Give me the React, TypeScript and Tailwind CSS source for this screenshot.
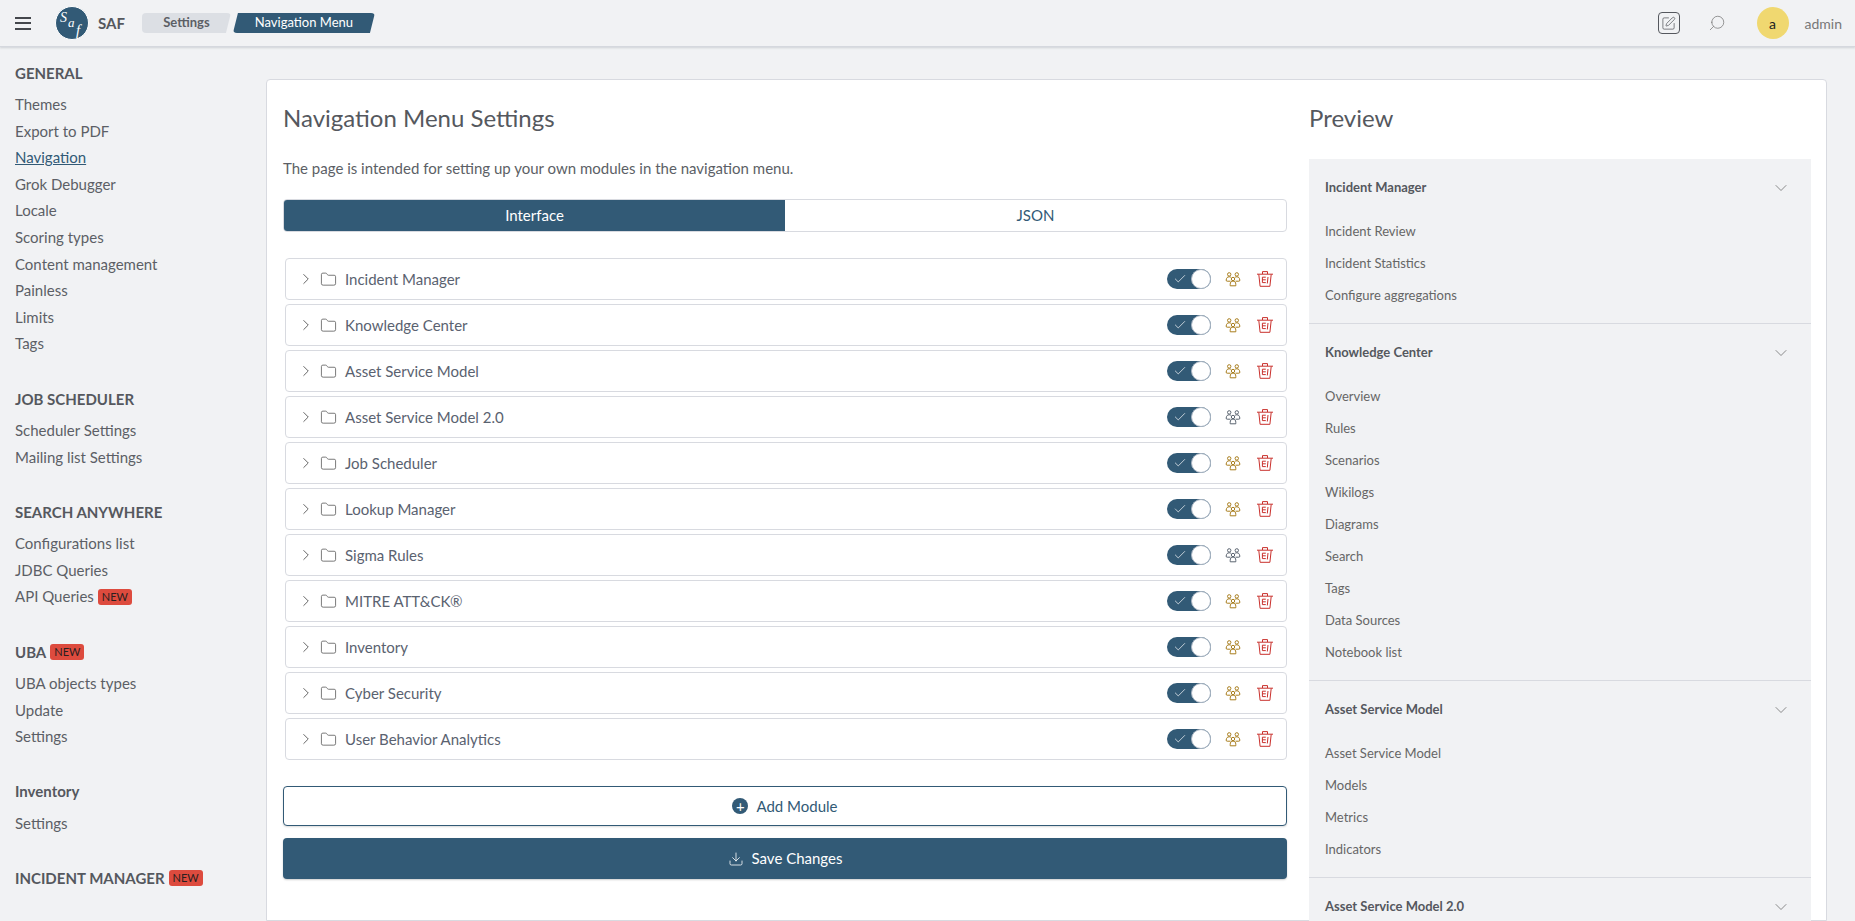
import { ChevronDown, ChevronRight, Check, Folder, Download, Search, SquarePen } from 'lucide-react';

type SideSection = { title: string; isNew?: boolean; items: { label: string; isNew?: boolean; active?: boolean }[] };

const sideSections: SideSection[] = [
  {
    title: 'GENERAL',
    items: [
      { label: 'Themes' },
      { label: 'Export to PDF' },
      { label: 'Navigation', active: true },
      { label: 'Grok Debugger' },
      { label: 'Locale' },
      { label: 'Scoring types' },
      { label: 'Content management' },
      { label: 'Painless' },
      { label: 'Limits' },
      { label: 'Tags' },
    ],
  },
  { title: 'JOB SCHEDULER', items: [{ label: 'Scheduler Settings' }, { label: 'Mailing list Settings' }] },
  {
    title: 'SEARCH ANYWHERE',
    items: [{ label: 'Configurations list' }, { label: 'JDBC Queries' }, { label: 'API Queries', isNew: true }],
  },
  { title: 'UBA', isNew: true, items: [{ label: 'UBA objects types' }, { label: 'Update' }, { label: 'Settings' }] },
  { title: 'Inventory', items: [{ label: 'Settings' }] },
  { title: 'INCIDENT MANAGER', isNew: true, items: [] },
];

const modules = [
  { name: 'Incident Manager' },
  { name: 'Knowledge Center' },
  { name: 'Asset Service Model' },
  { name: 'Asset Service Model 2.0', dim: true },
  { name: 'Job Scheduler' },
  { name: 'Lookup Manager' },
  { name: 'Sigma Rules', dim: true },
  { name: 'MITRE ATT&CK®' },
  { name: 'Inventory' },
  { name: 'Cyber Security' },
  { name: 'User Behavior Analytics' },
];

const previewGroups = [
  { title: 'Incident Manager', items: ['Incident Review', 'Incident Statistics', 'Configure aggregations'] },
  {
    title: 'Knowledge Center',
    items: ['Overview', 'Rules', 'Scenarios', 'Wikilogs', 'Diagrams', 'Search', 'Tags', 'Data Sources', 'Notebook list'],
  },
  { title: 'Asset Service Model', items: ['Asset Service Model', 'Models', 'Metrics', 'Indicators'] },
  { title: 'Asset Service Model 2.0', items: ['Services', 'Models'] },
];

function NewBadge() {
  return (
    <span className="ml-1 inline-block h-4 rounded-[3px] bg-[#dd4b3e] px-1 align-middle text-[11px] font-normal leading-4 text-[#2a2020]">
      NEW
    </span>
  );
}

function GroupIcon({ dim }: { dim?: boolean }) {
  return (
    <svg
      viewBox="0 0 16 16"
      className={`h-4 w-4 ${dim ? 'text-[#5b6470]' : 'text-[#a87d1c]'}`}
      fill="none"
      stroke="currentColor"
      strokeWidth="1"
    >
      <circle cx="4.2" cy="3.4" r="1.7" />
      <circle cx="11.8" cy="3.4" r="1.7" />
      <path d="M5.5 10.2H2.2a1 1 0 0 1-1-1.2c.2-2 1-3.2 3-3.2 .8 0 1.4.2 1.9.6" />
      <path d="M10.5 10.2h3.3a1 1 0 0 0 1-1.2c-.2-2-1-3.2-3-3.2-.8 0-1.4.2-1.9.6" />
      <circle cx="8" cy="8" r="1.7" />
      <path d="M5.2 14.8v-1.5c0-2 1-3.2 2.8-3.2s2.8 1.2 2.8 3.2v1.5z" />
    </svg>
  );
}

function TrashIcon() {
  return (
    <svg viewBox="0 0 16 16" className="h-4 w-4 text-[#c9302c]" fill="none" stroke="currentColor" strokeWidth="1">
      <path d="M0 3.2h16" />
      <path d="M5.5 3V.6h5V3" />
      <path d="M1.8 3.4l1.3 11.9h9.8l1.3-11.9" />
      <path d="M5.4 6.2h3.4M5.4 8.8h3.4M5.4 11.6h3.4M5.4 6.2v5.4" />
      <path d="M11 6l-.7 6.5" />
    </svg>
  );
}

function ModuleRow({ name, dim }: { name: string; dim?: boolean }) {
  return (
    <div className="ml-[2px] flex h-[42px] items-center rounded-[4px] border border-[#d8dae0] pl-[11px] pr-[13px]">
      <ChevronRight className="h-[18px] w-[18px] text-[#555]" strokeWidth={1.2} />
      <Folder className="ml-[5px] h-[17px] w-[17px] text-[#555]" strokeWidth={1.1} />
      <span className="ml-[8px] text-[15px] text-[#5a6270]">{name}</span>
      <div className="ml-auto flex items-center">
        <div className="flex h-[20px] w-[44px] items-center justify-between rounded-full bg-[#325a76] pl-[6px]">
          <Check className="h-[14px] w-[14px] text-white" strokeWidth={1.2} />
          <span className="h-[20px] w-[20px] rounded-full border border-[#a8b4c2] bg-white" />
        </div>
        <span className="ml-[14px]">
          <GroupIcon dim={dim} />
        </span>
        <span className="ml-[16px]">
          <TrashIcon />
        </span>
      </div>
    </div>
  );
}

function Logo() {
  return (
    <svg viewBox="0 0 34 34" className="h-[34px] w-[34px]">
      <circle cx="17" cy="17" r="16.5" fill="#325a76" stroke="#fff" strokeWidth="1" />
      <text x="5" y="16" fontSize="14" fill="#fff" fontFamily="'Liberation Serif', serif" fontStyle="italic">
        S
      </text>
      <text x="13" y="21" fontSize="13" fill="#fff" fontFamily="'Liberation Serif', serif" fontStyle="italic">
        a
      </text>
      <text x="21" y="29" fontSize="15" fill="#fff" fontFamily="'Liberation Serif', serif" fontStyle="italic">
        f
      </text>
    </svg>
  );
}

export default function App() {
  return (
    <div className="flex h-[921px] w-full flex-col overflow-hidden bg-[#f1f2f4] font-['Lato','Open_Sans',sans-serif] text-[15px] text-[#5c5f66]">
      <header className="z-10 flex h-[47px] shrink-0 items-center border-b border-[#d5d8de] bg-[#f1f2f4] shadow-[0_1px_2px_rgba(100,110,125,0.25)]">
        <div className="ml-[15px] flex h-[13px] w-[16px] flex-col justify-between">
          <span className="h-[2px] bg-[#44474c]" />
          <span className="h-[2px] bg-[#44474c]" />
          <span className="h-[2px] bg-[#44474c]" />
        </div>
        <div className="ml-[24px]">
          <Logo />
        </div>
        <span className="ml-[9px] text-[15px] font-bold text-[#55585e]">SAF</span>
        <div className="ml-[17px] flex h-5 w-[89px] items-center justify-center rounded-[4px] bg-[#dcdfe4] text-[13px] font-bold text-[#5c5f66] [clip-path:polygon(0_0,100%_0,calc(100%-5px)_100%,0_100%)]">
          Settings
        </div>
        <div className="ml-[2px] flex h-5 w-[142px] items-center justify-center rounded-[4px] bg-[#325a76] text-[13px] text-white [clip-path:polygon(5px_0,100%_0,calc(100%-5px)_100%,0_100%)]">
          Navigation Menu
        </div>
        <div className="ml-auto flex items-center">
          <div className="flex h-[22px] w-[22px] items-center justify-center rounded-[4px] border border-[#55585e]">
            <SquarePen className="h-[15px] w-[15px] text-[#55585e]" strokeWidth={1.2} />
          </div>
          <Search className="ml-[28px] h-[18px] w-[18px] -scale-x-100 text-[#777]" strokeWidth={1} />
          <div className="ml-[31px] flex h-8 w-8 items-center justify-center rounded-full bg-[#f0d870] text-[14px] text-[#222]">
            a
          </div>
          <span className="ml-[16px] mr-[13px] text-[14px] text-[#777]">admin</span>
        </div>
      </header>

      <div className="flex min-h-0 flex-1">
        <aside className="w-[266px] shrink-0 pl-[15px] pt-[14px]">
          {sideSections.map((section) => (
            <div key={section.title} className="mb-[30px]">
              <div className="mb-[6px] flex h-[24px] items-center text-[15px] font-bold text-[#55585e]">
                {section.title}
                {section.isNew && <NewBadge />}
              </div>
              {section.items.map((item, i) => (
                <div key={i} className="flex h-[26.6px] items-center">
                  <span className={item.active ? 'text-[#325a76] underline' : ''}>{item.label}</span>
                  {item.isNew && <NewBadge />}
                </div>
              ))}
            </div>
          ))}
        </aside>

        <main className="mr-[28px] mt-[32px] flex min-w-0 flex-1 rounded-t-[4px] border border-[#d8dae0] bg-white pl-[16px] pr-[15px]">
          <section className="w-[1004px] shrink-0">
            <h1 className="mt-[20px] h-[36px] text-[24px] font-normal leading-[36px] text-[#55585e]">
              Navigation Menu Settings
            </h1>
            <p className="mt-[22px] h-[20px] leading-5">
              The page is intended for setting up your own modules in the navigation menu.
            </p>
            <div className="mt-[21px] flex h-[33px] overflow-hidden rounded-[4px] border border-[#d8dae0]">
              <div className="flex w-1/2 items-center justify-center bg-[#325a76] text-white">Interface</div>
              <div className="flex w-1/2 items-center justify-center text-[#325a76]">JSON</div>
            </div>
            <div className="mt-[26px] flex flex-col gap-[4px]">
              {modules.map((m) => (
                <ModuleRow key={m.name} name={m.name} dim={m.dim} />
              ))}
            </div>
            <button className="mt-[26px] flex h-[40px] w-full items-center justify-center rounded-[4px] border border-[#325a76] bg-white text-[#325a76] shadow-[0_1px_2px_rgba(0,0,0,0.15)]">
              <span className="mr-[8px] flex h-4 w-4 items-center justify-center rounded-full bg-[#325a76] text-[15px] leading-none text-white">
                +
              </span>
              Add Module
            </button>
            <button className="mt-[12px] flex h-[41px] w-full items-center justify-center rounded-[4px] bg-[#325a76] text-white shadow-[0_1px_2px_rgba(0,0,0,0.2)]">
              <Download className="mr-[8px] h-4 w-4" strokeWidth={1.2} />
              Save Changes
            </button>
          </section>

          <section className="ml-[22px] min-w-0 flex-1">
            <h2 className="mt-[20px] h-[36px] text-[24px] font-normal leading-[36px] text-[#55585e]">Preview</h2>
            <div className="mt-[23px] bg-[#f1f2f4]">
              {previewGroups.map((group) => (
                <div key={group.title} className="border-b border-[#d8dae0] pb-[11px]">
                  <div className="flex h-[57px] items-center justify-between pl-[16px] pr-[20px]">
                    <span className="text-[13px] font-bold text-[#55585e]">{group.title}</span>
                    <ChevronDown className="h-[20px] w-[20px] text-[#666]" strokeWidth={0.9} />
                  </div>
                  <div className="pl-[16px] text-[13px] text-[#666]">
                    {group.items.map((item) => (
                      <div key={item} className="flex h-[32px] items-center">
                        {item}
                      </div>
                    ))}
                  </div>
                </div>
              ))}
            </div>
          </section>
        </main>
      </div>
    </div>
  );
}
